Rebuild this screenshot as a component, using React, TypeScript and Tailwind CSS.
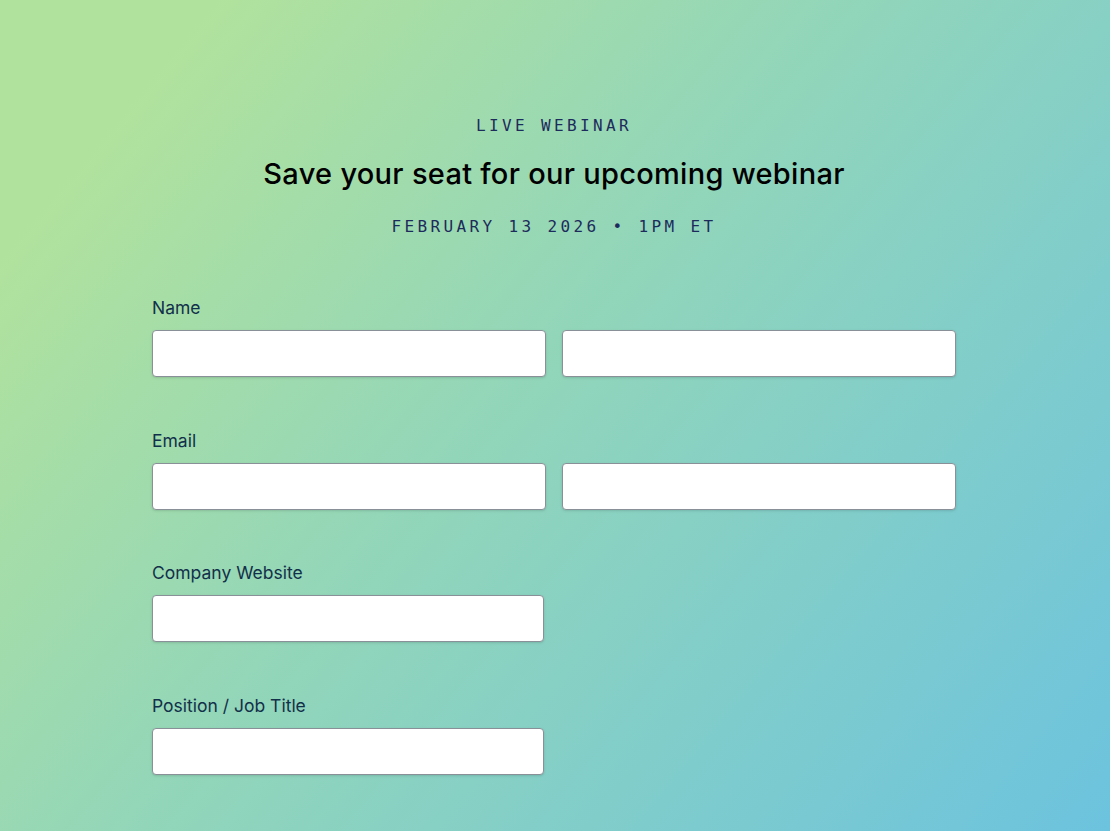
import React from 'react';

const MONO = { fontFamily: '"DejaVu Sans Mono", "Liberation Mono", monospace' };

function Field({ label, double = false }: { label: string; double?: boolean }) {
  return (
    <div className="mb-[51.6px]">
      <label className="block text-[17.5px] leading-6 text-[#12304a]">{label}</label>
      <div className="mt-[10px] flex gap-4">
        <input
          className={`h-[47px] ${double ? 'w-[394px]' : 'w-[392px]'} rounded-[4px] border border-[#8a9097] bg-white shadow-sm outline-none`}
        />
        {double && (
          <input className="h-[47px] w-[394px] rounded-[4px] border border-[#8a9097] bg-white shadow-sm outline-none" />
        )}
      </div>
    </div>
  );
}

export default function App() {
  return (
    <div className="min-h-screen bg-[linear-gradient(130deg,#b1e29d_12%,#93d6b8_45%,#6cc3de_100%)] bg-fixed font-['Inter',sans-serif]">
      <div className="mx-auto w-[806px] pr-[2px] pt-[114px] pb-20">
        <header className="flex flex-col items-center text-center">
          <p className="text-[16px] leading-6 tracking-[0.21em] text-[#1d2b5c]" style={MONO}>
            LIVE WEBINAR
          </p>
          <h1 className="mt-[20px] text-[29px] font-medium leading-8 tracking-[0.01em] text-black">
            Save your seat for our upcoming webinar
          </h1>
          <p className="mt-[25px] text-[16px] leading-6 tracking-[0.21em] text-[#1d2b5c]" style={MONO}>
            FEBRUARY 13 2026 • 1PM ET
          </p>
        </header>

        <form className="mt-[57px]">
          <Field label="Name" double />
          <Field label="Email" double />
          <Field label="Company Website" />
          <Field label="Position / Job Title" />
          <Field label="Industry Type" />
        </form>
      </div>
    </div>
  );
}
